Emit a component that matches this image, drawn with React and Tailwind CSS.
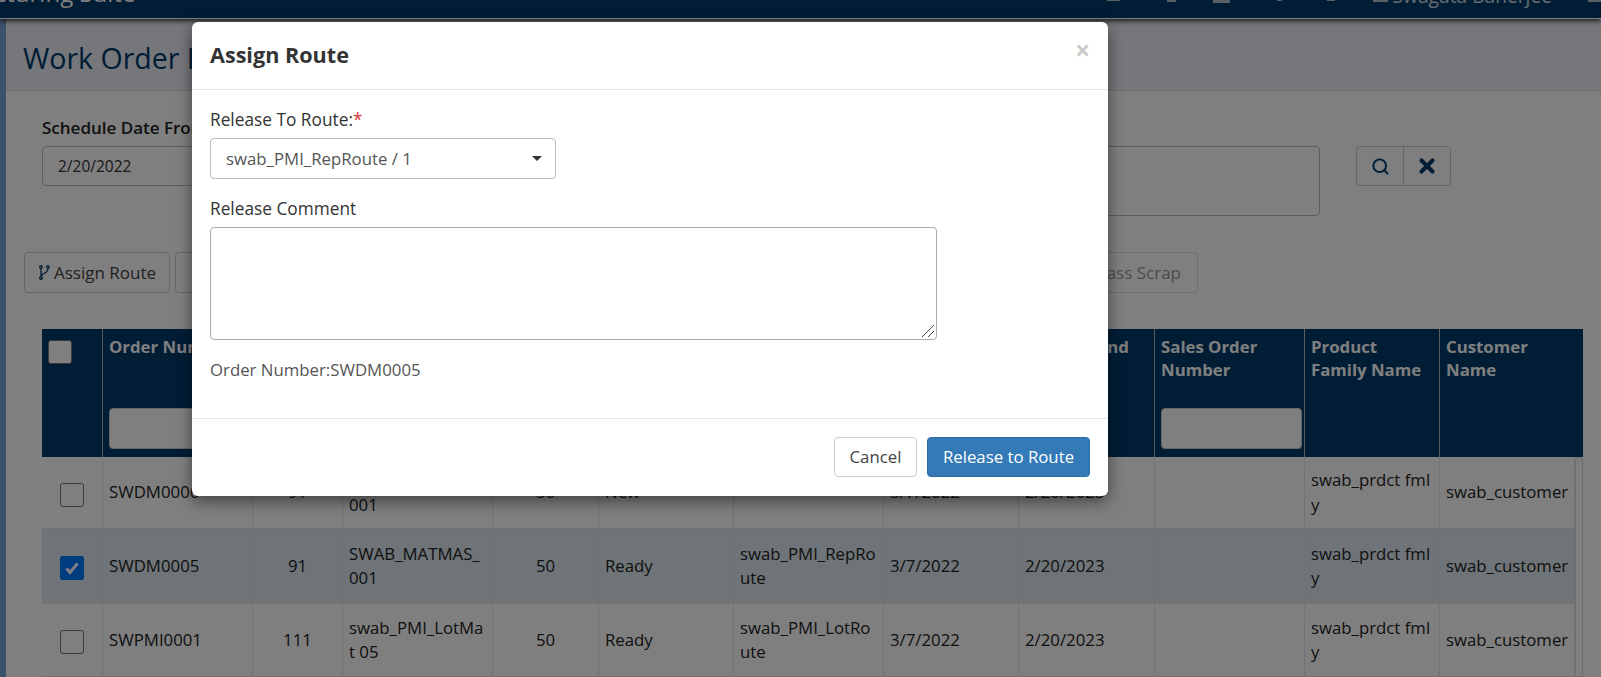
import { Search, X } from 'lucide-react';

const columns = [
  { w: 'w-[61px]' },
  { w: 'w-[150px]', title: 'Order Number', filter: true },
  { w: 'w-[90px]', title: 'Qty' },
  { w: 'w-[150px]', title: 'Material', filter: true },
  { w: 'w-[106px]', title: 'Qty' },
  { w: 'w-[135px]', title: 'Status', filter: true },
  { w: 'w-[150px]', title: 'Route Name', filter: true },
  { w: 'w-[135px]', title: 'Planned Start' },
  { w: 'w-[136px]', title: 'Planned End' },
  { w: 'w-[150px]', title: 'Sales Order Number', filter: true },
  { w: 'w-[135px]', title: 'Product Family Name' },
  { w: 'w-[143px]', title: 'Customer Name' },
];

const rows = [
  { h: 'h-[72px]', order: 'SWDM0006', num: '91', mat: 'SWAB_MATMAS_001', qty: '50', status: 'New', route: '', start: '3/7/2022', end: '2/20/2023' },
  { h: 'h-[75px]', order: 'SWDM0005', num: '91', mat: 'SWAB_MATMAS_001', qty: '50', status: 'Ready', route: 'swab_PMI_RepRoute', start: '3/7/2022', end: '2/20/2023', selected: true },
  { h: 'h-[73px]', order: 'SWPMI0001', num: '111', mat: 'swab_PMI_LotMat 05', qty: '50', status: 'Ready', route: 'swab_PMI_LotRoute', start: '3/7/2022', end: '2/20/2023' },
];

function Checkbox({ checked }) {
  if (checked) {
    return (
      <div className="w-6 h-6 rounded-[3px] bg-[#0075ff] flex items-center justify-center">
        <svg width="16" height="16" viewBox="0 0 16 16" fill="none" stroke="white" strokeWidth="3"><path d="M2.500 8.500l3.500 4 7.500-9" /></svg>
      </div>
    );
  }
  return <div className="w-6 h-6 rounded-[3px] bg-white border border-[#767676]"></div>;
}

function Row({ row }) {
  const cell = 'px-[6px] border-r border-[#e4e4e4] flex items-center break-all shrink-0';
  return (
    <div className={`flex ${row.h} border-b border-[#e4e4e4] text-[16.8px] leading-[24.500px] text-[#222] ${row.selected ? 'bg-[#dce8f0]' : 'bg-white'}`}>
      <div className={`${cell} w-[61px] pl-[18px] pr-0 pt-[4px]`}><Checkbox checked={row.selected} /></div>
      <div className={`${cell} w-[150px]`}>{row.order}</div>
      <div className={`${cell} w-[90px] justify-center`}>{row.num}</div>
      <div className={`${cell} w-[150px]`}>{row.mat}</div>
      <div className={`${cell} w-[106px] justify-center`}>{row.qty}</div>
      <div className={`${cell} w-[135px]`}>{row.status}</div>
      <div className={`${cell} w-[150px]`}>{row.route}</div>
      <div className={`${cell} w-[135px]`}>{row.start}</div>
      <div className={`${cell} w-[136px]`}>{row.end}</div>
      <div className={`${cell} w-[150px]`}></div>
      <div className={`${cell} w-[135px]`}>swab_prdct fmly</div>
      <div className={`${cell} w-[135px] whitespace-nowrap`}>swab_customer</div>
    </div>
  );
}

export default function App() {
  return (
    <div className="relative w-[1601px] h-[677px] overflow-hidden bg-white font-['Open_Sans',sans-serif]">
      {/* page behind the modal */}
      <div className="h-[19px] bg-[#003a6c] border-b border-white overflow-hidden flex justify-between shadow-[0_2px_5px_rgba(0,0,0,0.8)] relative">
        <div className="text-[24px] leading-[30px] text-white mt-[-22px] ml-[-91px] whitespace-nowrap">Manufacturing Suite</div>
        <div className="flex items-start text-white/80">
          <span className="w-[13px] h-[1px] bg-white/70"></span>
          <span className="w-[9px] h-[2px] bg-white/70 ml-[47px]"></span>
          <span className="w-[17px] h-[3px] bg-white/70 ml-[37px]"></span>
          <span className="w-[5px] h-[1px] bg-white/70 ml-[47px]"></span>
          <span className="w-[8px] h-[1px] bg-white/70 ml-[45px]"></span>
          <span className="w-[15px] h-[2px] bg-white/70 ml-[38px]"></span>
          <span className="text-[19.200px] leading-[22px] mt-[-15px] ml-[5px] whitespace-nowrap">Swagata Banerjee</span>
          <span className="w-[13px] h-[2px] bg-white/70 ml-[36px]"></span>
        </div>
      </div>
      <div className="flex">
        <div className="w-[6px] h-[658px] bg-[#76a4d0] shrink-0"></div>
        <div className="flex-1 min-w-0">
          <div className="h-[72px] bg-[#eaeef6] border-b border-[#dcdcdc] pl-[17px] pt-[20px] text-[28.500px] leading-[38px] text-[#003a6c]">Work Order Release</div>
          <div className="pl-[36px] pt-[27px] flex items-start">
            <div className="w-[300px]">
              <div className="text-[17px] font-semibold leading-[20px] text-[#222] mb-[8px] whitespace-nowrap">Schedule Date From</div>
              <div className="h-10 w-[260px] border border-[#bbb] rounded-[4px] pl-[15px] pt-[1px] flex items-center text-[15.500px] text-[#333]">2/20/2022</div>
            </div>
            <div className="ml-[478px] mt-[28px] w-[500px] h-[70px] border border-[#bbb] rounded-[4px] shrink-0"></div>
            <div className="ml-[36px] mt-[28px] flex h-10 w-[95px] border border-[#ccc] rounded-[4px] shrink-0 text-[#003a6c]">
              <div className="flex-1 border-r border-[#ccc] flex items-center justify-center"><Search size={19} strokeWidth={2.500} /></div>
              <div className="flex-1 flex items-center justify-center"><X size={22} strokeWidth={4.500} /></div>
            </div>
          </div>
          <div className="pl-[18px] mt-[36px] flex gap-[5px] text-[17px] text-[#444]">
            <div className="h-[41px] w-[146px] border border-[#ccc] rounded-[4px] flex items-center pl-[14px] gap-[4px] shrink-0 whitespace-nowrap">
              <svg width="11" height="15" viewBox="0 0 11 15" fill="none" stroke="#003a6c" strokeWidth="1.300">
                <circle cx="2" cy="2" r="1.300" />
                <circle cx="2" cy="13" r="1.300" />
                <circle cx="9" cy="2" r="1.300" />
                <path d="M2 3.500v8M9 3.500c0 3-2 4-4 5-1.500.8-3 1.500-3 3" />
              </svg>
              Assign Route
            </div>
            <div className="h-[41px] w-[100px] border border-[#ccc] rounded-[4px] shrink-0"></div>
            <div className="ml-[800px] h-[41px] w-[118px] border border-[#ddd] rounded-[4px] flex items-center justify-end pr-[16px] text-[#999] shrink-0 whitespace-nowrap">Mass Scrap</div>
          </div>
          <div className="ml-[36px] mt-[36px] w-[1541px]">
            <div className="flex h-[128px] bg-[#003a6c] text-white font-bold text-[16.8px] leading-[23px]">
              {columns.map((col, i) => (
                <div key={i} className={`${col.w} shrink-0 border-r border-[#bbb] px-[6px] pt-[6px] flex flex-col justify-between pb-[8px] last:border-r-0`}>
                  {i === 0 ? (
                    <div className="w-6 h-6 rounded-[3px] bg-white border border-[#767676] mt-[5px]"></div>
                  ) : (
                    <div>{col.title}</div>
                  )}
                  {col.filter && <div className="h-[41px] mr-[-4px] bg-white rounded-[4px] border border-[#ccc]"></div>}
                </div>
              ))}
            </div>
            <div className="flex">
              <div className="w-[1533px] shrink-0">
                {rows.map(r => <Row key={r.order} row={r} />)}
              </div>
              <div className="w-2 h-[220px] bg-white border border-[#ddd] rounded-t-[4px] shrink-0"></div>
            </div>
          </div>
        </div>
      </div>

      {/* backdrop */}
      <div className="absolute inset-0 bg-black/50"></div>

      {/* modal */}
      <div className="absolute left-[192px] top-[22px] w-[916px] h-[474px] bg-white rounded-[6px] shadow-[0_5px_15px_rgba(0,0,0,0.5)] flex flex-col">
        <div className="h-[68px] border-b border-[#e5e5e5] pl-[18px] pr-[18px] flex justify-between shrink-0">
          <div className="text-[21.600px] font-bold leading-[66px] text-[#333]">Assign Route</div>
          <div className="text-[#c9c9c9] font-bold text-[26px] leading-[56px]">×</div>
        </div>
        <div className="flex-1 pl-[18px] pt-[19px] text-[16.8px] text-[#333]">
          <div className="text-[17.300px] leading-[22px] mb-[7px] font-medium">Release To Route:<span className="text-[#d9363e]">*</span></div>
          <div className="w-[346px] h-[41px] border border-[#bbb] rounded-[4px] flex items-center justify-between pl-[15px] pr-[13px] text-[#555]">
            <span>swab_PMI_RepRoute / 1</span>
            <span className="w-0 h-0 border-x-[5px] border-x-transparent border-t-[5px] border-t-[#333]"></span>
          </div>
          <div className="text-[17.300px] leading-[22px] mt-[19px] mb-[7px] font-medium">Release Comment</div>
          <div className="relative w-[727px] h-[113px] border border-[#aaa] rounded-[4px]">
            <svg className="absolute right-[1px] bottom-[1px]" width="14" height="14" viewBox="0 0 14 14" stroke="#444" strokeWidth="1" fill="none"><path d="M1 13L13 1M7 13l6-6" /></svg>
          </div>
          <div className="mt-[19px] leading-[22px] text-[#555]">Order Number:SWDM0005</div>
        </div>
        <div className="h-[78px] border-t border-[#e5e5e5] flex justify-end items-center gap-[10px] pr-[18px] pb-[1px] text-[16.8px] shrink-0">
          <div className="w-[83px] h-10 border border-[#ccc] rounded-[4px] flex items-center justify-center text-[#444]">Cancel</div>
          <div className="w-[163px] h-10 bg-[#337ab7] border border-[#2e6da4] rounded-[4px] flex items-center justify-center text-white">Release to Route</div>
        </div>
      </div>
    </div>
  );
}
